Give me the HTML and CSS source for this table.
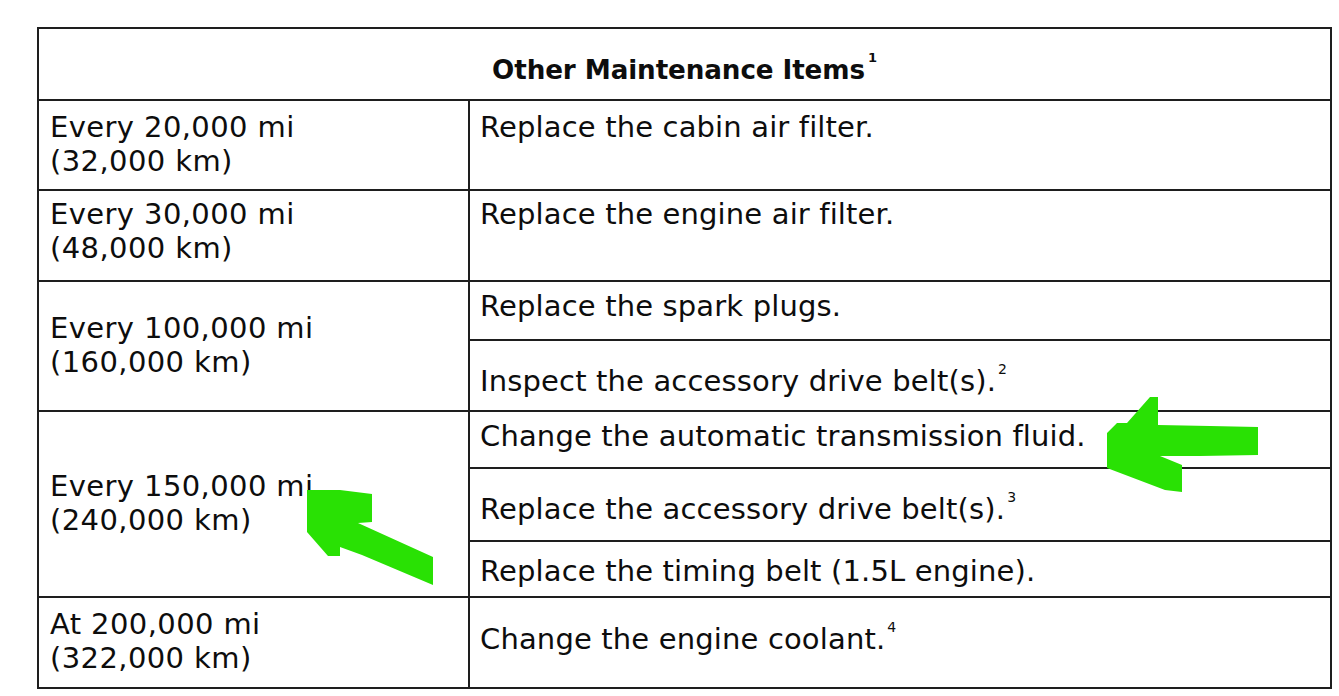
FILE: index.html
```html
<!DOCTYPE html>
<html lang="en">
<head>
<meta charset="utf-8">
<title>Other Maintenance Items</title>
<link rel="stylesheet" href="styles.css">
</head>
<body>
<div class="page">
  <table class="maint">
    <colgroup><col class="c1"><col class="c2"></colgroup>
    <tr class="rh"><th colspan="2" class="head">Other Maintenance Items<sup>1</sup></th></tr>
    <tr class="r1">
      <td class="when">Every 20,000 mi<br>(32,000 km)</td>
      <td class="task">Replace the cabin air filter.</td>
    </tr>
    <tr class="r2">
      <td class="when">Every 30,000 mi<br>(48,000 km)</td>
      <td class="task">Replace the engine air filter.</td>
    </tr>
    <tr class="r3a">
      <td class="when span3" rowspan="2">Every 100,000 mi<br>(160,000 km)</td>
      <td class="task">Replace the spark plugs.</td>
    </tr>
    <tr class="r3b">
      <td class="task">Inspect the accessory drive belt(s).<sup>2</sup></td>
    </tr>
    <tr class="r4a">
      <td class="when span4" rowspan="3">Every 150,000 mi<br>(240,000 km)</td>
      <td class="task">Change the automatic transmission fluid.</td>
    </tr>
    <tr class="r4b">
      <td class="task">Replace the accessory drive belt(s).<sup>3</sup></td>
    </tr>
    <tr class="r4c">
      <td class="task">Replace the timing belt (1.5L engine).</td>
    </tr>
    <tr class="r5">
      <td class="when">At 200,000 mi<br>(322,000 km)</td>
      <td class="task">Change the engine coolant.<sup>4</sup></td>
    </tr>
  </table>
  <svg class="marks" width="1339" height="696" viewBox="0 0 1339 696" aria-hidden="true">
    <polygon points="1150,397 1158,397 1158,425 1210,426 1258,427 1258,455 1200,456 1160,456 1182,465 1182,492 1165,490 1107,468 1107,433 1117,423 1127,423"/>
    <polygon points="307,490 340,490 372,494 372,522 358,523 433,557 433,585 362,555 340,547 340,556 328,556 307,532"/>
  </svg>
</div>
</body>
</html>
```
FILE: styles.css
```css
html, body {
  margin: 0;
  background: #ffffff;
}

body {
  font-family: "DejaVu Sans", "Liberation Sans", sans-serif;
  color: #0d0d0d;
}

.page {
  position: relative;
  width: 1339px;
  height: 696px;
  padding: 27px 0 0 37px;
  box-sizing: border-box;
  overflow: hidden;
}

.maint {
  border-collapse: separate;
  border-spacing: 0;
  border-top: 2px solid #1e1e1e;
  border-left: 2px solid #1e1e1e;
  table-layout: fixed;
  width: 1295px;
}

.c1 { width: 431px; }
.c2 { width: 862px; }

.maint th,
.maint td {
  box-sizing: border-box;
  border-right: 2px solid #1e1e1e;
  border-bottom: 2px solid #1e1e1e;
  vertical-align: top;
  text-align: left;
  font-size: 29px;
  line-height: 33.5px;
  font-weight: normal;
}

.maint .head {
  height: 72px;
  text-align: center;
  font-weight: bold;
  font-size: 26.2px;
  line-height: 30px;
  letter-spacing: -0.1px;
  padding: 26px 0 0;
}

.when { padding: 0 6px 0 11px; letter-spacing: 0.4px; }
.task { padding: 0 6px 0 10px; letter-spacing: 0.15px; }

.r1 td { height: 90px; padding-top: 10px; }
.r2 td { height: 91px; padding-top: 7px; }
.r3a .task { height: 59px; padding-top: 8px; }
.r3b .task { height: 71px; padding-top: 24px; }
.r4a .task { height: 57px; padding-top: 8px; }
.r4b .task { height: 73px; padding-top: 24px; }
.r4c .task { height: 56px; padding-top: 13px; }
.r5 td { height: 91px; }
.r5 .when { padding-top: 10px; }
.r5 .task { padding-top: 25px; }

.maint .span3 { padding-top: 30px; }
.maint .span4 { padding-top: 58px; }

sup {
  font-size: 14px;
  font-weight: normal;
  line-height: 0;
  vertical-align: 17px;
  margin-left: 2px;
  letter-spacing: 0;
}

.head sup {
  margin-left: 3px;
  font-weight: bold;
  font-size: 13px;
}

.marks {
  position: absolute;
  top: 0;
  left: 0;
  pointer-events: none;
}

.marks polygon {
  fill: #29e104;
}
```
